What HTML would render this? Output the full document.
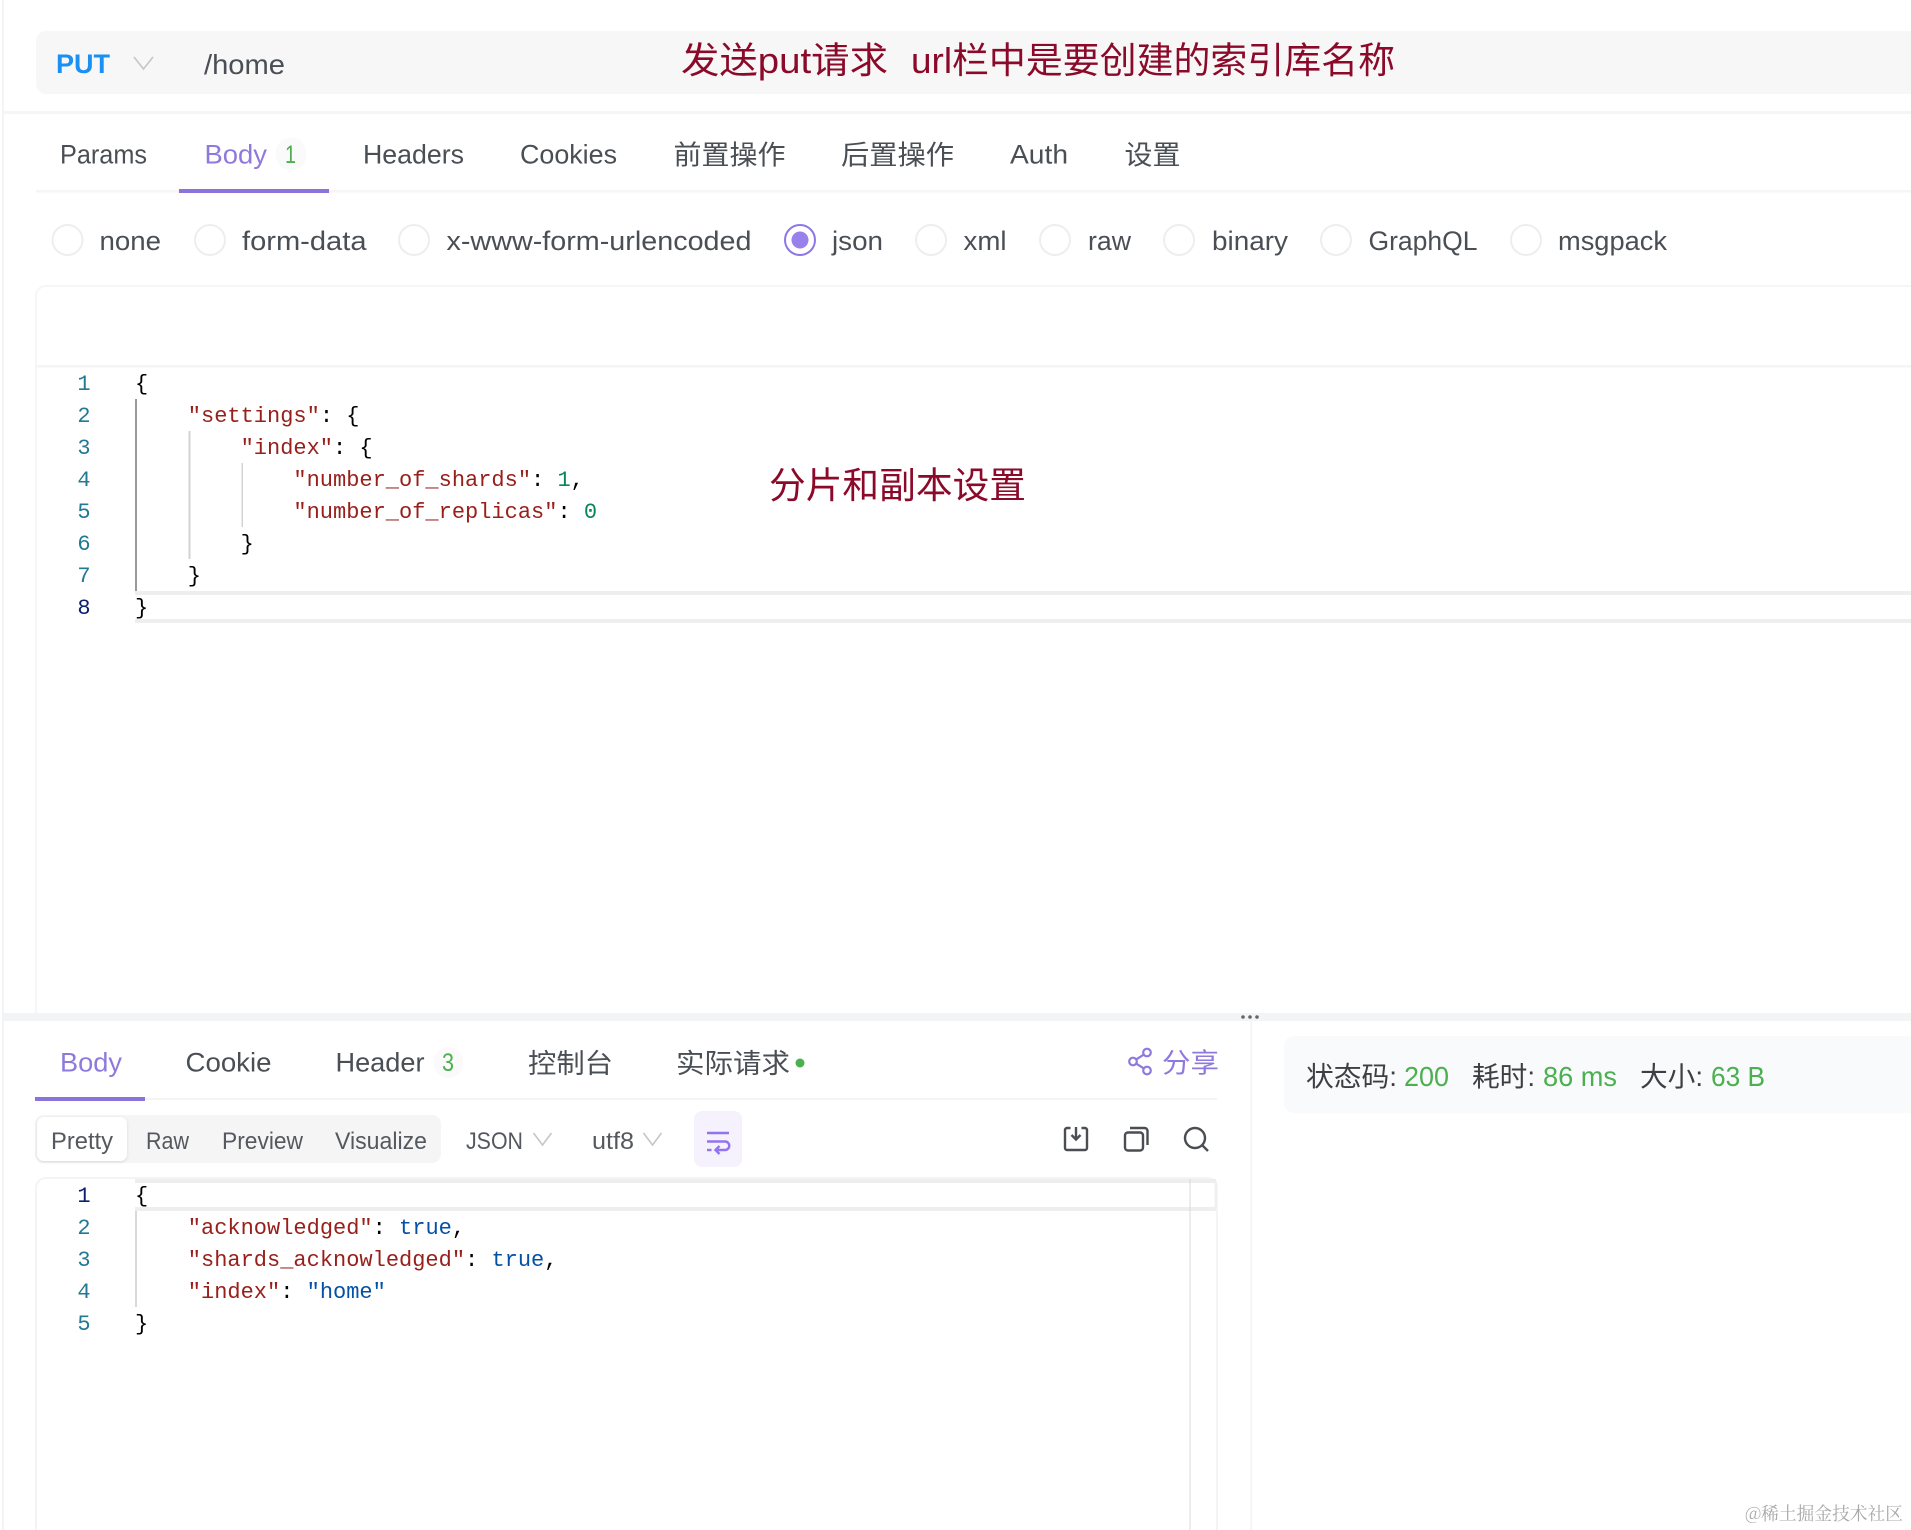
<!DOCTYPE html>
<html lang="zh-CN">
<head>
<meta charset="utf-8">
<title>PUT /home</title>
<style>
html,body{margin:0;padding:0;background:#fff;width:1911px;height:1530px;overflow:hidden}
svg{display:block}
text{font-family:"Liberation Sans","Noto Sans CJK SC",sans-serif;white-space:pre}
.t{font-size:27px;fill:#4a4f55}
.c{font-size:27.5px;fill:#4a4f55}
.s{font-size:24px;fill:#55595f}
.m{font-family:"Liberation Mono","DejaVu Sans Mono",monospace;font-size:22px;fill:#000;white-space:pre}
.n{fill:#237893;text-anchor:middle}
.k{fill:#98201c}
.v{fill:#098658}
.b{fill:#0451a5}
.a{font-size:36.5px;fill:#8b0a2a}
.g{fill:#4caf50}
</style>
</head>
<body>
<svg xmlns="http://www.w3.org/2000/svg" width="1911" height="1530" viewBox="0 0 1911 1530">
<defs>
<filter id="sh" x="-20%" y="-20%" width="140%" height="140%"><feDropShadow dx="0" dy="1" stdDeviation="1.500" flood-color="#000" flood-opacity="0.12"/></filter>
</defs>
<rect width="1911" height="1530" fill="#fff"/>
<!-- page edge -->
<rect x="2" y="0" width="2" height="1530" fill="#f4f4f4"/>

<!-- URL bar -->
<path d="M1911 31H46a10 10 0 0 0-10 10v43a10 10 0 0 0 10 10h1865z" fill="#f7f7f7"/>
<text x="56" y="73" textLength="54" lengthAdjust="spacingAndGlyphs" style="font-size:27px;font-weight:700;fill:#1a90f5">PUT</text>
<path d="M134 57l9.500 12 9.500-12" fill="none" stroke="#c4c6c8" stroke-width="1.600"/>
<text x="204" y="74" textLength="81" lengthAdjust="spacingAndGlyphs" style="font-size:28px;fill:#4a4f55">/home</text>
<text class="a" x="681" y="73" textLength="207" lengthAdjust="spacingAndGlyphs">发送put请求</text>
<text class="a" x="911" y="73" textLength="484" lengthAdjust="spacingAndGlyphs">url栏中是要创建的索引库名称</text>
<rect x="4" y="111" width="1907" height="3" fill="#f5f5f5"/>

<!-- Request tabs -->
<rect x="36" y="190" width="1875" height="2.500" fill="#f6f6f6"/>
<rect x="179" y="189" width="150" height="4" fill="#8c72db"/>
<text class="t" x="60" y="163.500" textLength="87" lengthAdjust="spacingAndGlyphs">Params</text>
<text class="t" x="204.500" y="163.500" textLength="62.500" lengthAdjust="spacingAndGlyphs" style="fill:#9079dc">Body</text>
<rect x="276" y="138" width="30" height="32" rx="14" fill="#fafafa"/>
<text class="g" x="285" y="163" textLength="11" lengthAdjust="spacingAndGlyphs" style="font-size:25px">1</text>
<text class="t" x="363" y="163.500" textLength="101" lengthAdjust="spacingAndGlyphs">Headers</text>
<text class="t" x="520" y="163.500" textLength="97" lengthAdjust="spacingAndGlyphs">Cookies</text>
<text class="t" x="673.500" y="164.500" textLength="112" lengthAdjust="spacingAndGlyphs">前置操作</text>
<text class="t" x="841" y="164.500" textLength="113" lengthAdjust="spacingAndGlyphs">后置操作</text>
<text class="t" x="1010" y="163.500" textLength="58" lengthAdjust="spacingAndGlyphs">Auth</text>
<text class="t" x="1124.500" y="164.500" textLength="56" lengthAdjust="spacingAndGlyphs">设置</text>

<!-- Radios -->
<g fill="#fff" stroke="#eeeeee" stroke-width="2">
<circle cx="67.500" cy="240" r="15"/>
<circle cx="210" cy="240" r="15"/>
<circle cx="414" cy="240" r="15"/>
<circle cx="931" cy="240" r="15"/>
<circle cx="1055" cy="240" r="15"/>
<circle cx="1179" cy="240" r="15"/>
<circle cx="1336" cy="240" r="15"/>
<circle cx="1526" cy="240" r="15"/>
</g>
<circle cx="800" cy="240" r="15" fill="#fff" stroke="#8f76e6" stroke-width="2"/>
<circle cx="800" cy="240" r="8.500" fill="#9a80ec"/>
<text class="t" x="99.500" y="250" textLength="61.500" lengthAdjust="spacingAndGlyphs">none</text>
<text class="t" x="242" y="250" textLength="124.500" lengthAdjust="spacingAndGlyphs">form-data</text>
<text class="t" x="446.500" y="250" textLength="305" lengthAdjust="spacingAndGlyphs">x-www-form-urlencoded</text>
<text class="t" x="832" y="250" textLength="51" lengthAdjust="spacingAndGlyphs">json</text>
<text class="t" x="963.500" y="250" textLength="43" lengthAdjust="spacingAndGlyphs">xml</text>
<text class="t" x="1088" y="250" textLength="43" lengthAdjust="spacingAndGlyphs">raw</text>
<text class="t" x="1212" y="250" textLength="76" lengthAdjust="spacingAndGlyphs">binary</text>
<text class="t" x="1368.500" y="250" textLength="109" lengthAdjust="spacingAndGlyphs">GraphQL</text>
<text class="t" x="1558" y="250" textLength="109" lengthAdjust="spacingAndGlyphs">msgpack</text>

<!-- Request editor -->
<path d="M1911 286H46a10 10 0 0 0-10 10v717" fill="none" stroke="#f6f6f6" stroke-width="2"/>
<rect x="36" y="365" width="1875" height="2.500" fill="#f5f5f5"/>
<path d="M135 593H1911M135 621H1911" stroke="#eeeeee" stroke-width="4" fill="none"/>
<rect x="135" y="399" width="2" height="192" fill="#999"/>
<rect x="188.500" y="431" width="2" height="128" fill="#d3d3d3"/>
<rect x="241.500" y="463" width="1.500" height="64" fill="#d3d3d3"/>
<text class="m n" x="84" y="390">1</text>
<text class="m n" x="84" y="422">2</text>
<text class="m n" x="84" y="454">3</text>
<text class="m n" x="84" y="486">4</text>
<text class="m n" x="84" y="518">5</text>
<text class="m n" x="84" y="550">6</text>
<text class="m n" x="84" y="582">7</text>
<text class="m n" x="84" y="614" style="fill:#0b216f">8</text>
<text class="m" x="135" y="390">{</text>
<text class="m" x="187.800" y="422"><tspan class="k">"settings"</tspan>: {</text>
<text class="m" x="240.600" y="454"><tspan class="k">"index"</tspan>: {</text>
<text class="m" x="293.400" y="486"><tspan class="k">"number_of_shards"</tspan>: <tspan class="v">1</tspan>,</text>
<text class="m" x="293.400" y="518"><tspan class="k">"number_of_replicas"</tspan>: <tspan class="v">0</tspan></text>
<text class="m" x="240.600" y="550">}</text>
<text class="m" x="187.800" y="582">}</text>
<text class="m" x="135" y="614">}</text>
<text class="a" x="769" y="498" textLength="257" lengthAdjust="spacingAndGlyphs">分片和副本设置</text>

<!-- Splitter -->
<rect x="4" y="1013" width="1907" height="8" fill="#f3f4f6"/>
<circle cx="1243" cy="1017" r="1.800" fill="#666"/>
<circle cx="1250" cy="1017" r="1.800" fill="#666"/>
<circle cx="1257" cy="1017" r="1.800" fill="#666"/>
<rect x="1250.500" y="1021" width="1.500" height="509" fill="#f3f3f3"/>

<!-- Response tabs -->
<rect x="36" y="1098" width="1181" height="2" fill="#f4f4f4"/>
<rect x="35" y="1097" width="110" height="4" fill="#8c72db"/>
<text class="t" x="60" y="1071.500" textLength="62" lengthAdjust="spacingAndGlyphs" style="fill:#9079dc">Body</text>
<text class="t" x="185.500" y="1071.500" textLength="86" lengthAdjust="spacingAndGlyphs">Cookie</text>
<text class="t" x="335.500" y="1071.500" textLength="89" lengthAdjust="spacingAndGlyphs">Header</text>
<rect x="434" y="1047" width="29" height="31" rx="14" fill="#fafafa"/>
<text class="g" x="442" y="1071" textLength="12" lengthAdjust="spacingAndGlyphs" style="font-size:25px">3</text>
<text class="t" x="528" y="1073" textLength="85" lengthAdjust="spacingAndGlyphs">控制台</text>
<text class="t" x="676" y="1073" textLength="114" lengthAdjust="spacingAndGlyphs">实际请求</text>
<circle cx="800" cy="1063" r="4.500" fill="#4caf50"/>
<!-- share -->
<g fill="none" stroke="#9079dc" stroke-width="2.200">
<circle cx="1147" cy="1052.500" r="3.800"/>
<circle cx="1133" cy="1061.500" r="3.800"/>
<circle cx="1147" cy="1070.500" r="3.800"/>
<path d="M1143.800 1054.600l-7.600 4.800M1136.200 1063.600l7.600 4.800"/>
</g>
<text class="t" x="1162" y="1072.500" textLength="57" lengthAdjust="spacingAndGlyphs" style="fill:#9079dc">分享</text>

<!-- Response toolbar -->
<rect x="35" y="1115" width="406" height="48" rx="9" fill="#f5f5f6"/>
<rect x="37" y="1117" width="90" height="44" rx="7" fill="#fff" filter="url(#sh)"/>
<text class="s" x="51" y="1149" textLength="62" lengthAdjust="spacingAndGlyphs">Pretty</text>
<text class="s" x="146" y="1149" textLength="43" lengthAdjust="spacingAndGlyphs">Raw</text>
<text class="s" x="222" y="1149" textLength="81" lengthAdjust="spacingAndGlyphs">Preview</text>
<text class="s" x="335" y="1149" textLength="92" lengthAdjust="spacingAndGlyphs">Visualize</text>
<text class="s" x="466" y="1149" textLength="57" lengthAdjust="spacingAndGlyphs">JSON</text>
<path d="M533.500 1133l9 12 9-12" fill="none" stroke="#c4c6c8" stroke-width="1.600"/>
<text class="s" x="592" y="1149" textLength="42" lengthAdjust="spacingAndGlyphs">utf8</text>
<path d="M643.500 1133l9 12 9-12" fill="none" stroke="#c4c6c8" stroke-width="1.600"/>
<rect x="694" y="1111" width="48" height="56" rx="8" fill="#f5f1fd"/>
<g fill="none" stroke="#9373ee" stroke-width="2.400">
<path d="M707 1133h22"/>
<path d="M707 1141.500h18a4.200 4.200 0 0 1 0 8.500h-9"/>
<path d="M719.500 1146l-4 4 4 4"/>
<path d="M707 1150h4.500"/>
</g>
<!-- save -->
<g fill="none" stroke="#4a4d52" stroke-width="2.400">
<path d="M1070.500 1128h-3.500a2 2 0 0 0-2 2v18a2 2 0 0 0 2 2h18a2 2 0 0 0 2-2v-18a2 2 0 0 0-2-2h-3.500"/>
<path d="M1076 1127v12"/>
<path d="M1071.500 1135l4.500 4.500 4.500-4.500"/>
<!-- copy -->
<rect x="1125" y="1132.500" width="18" height="18" rx="3"/>
<path d="M1130 1128h14.500a3 3 0 0 1 3 3v14"/>
<!-- search -->
<circle cx="1195" cy="1138" r="10"/>
<path d="M1202.500 1145.500l5.500 5.500"/>
</g>

<!-- Status -->
<path d="M1911 1036H1294a10 10 0 0 0-10 10v57a10 10 0 0 0 10 10h617z" fill="#f9fafb"/>
<text class="c" x="1306" y="1086" textLength="91" lengthAdjust="spacingAndGlyphs" style="fill:#3c3f43">状态码:</text>
<text class="c g" x="1404" y="1086" textLength="45" lengthAdjust="spacingAndGlyphs">200</text>
<text class="c" x="1472" y="1086" textLength="63" lengthAdjust="spacingAndGlyphs" style="fill:#3c3f43">耗时:</text>
<text class="c g" x="1543" y="1086" textLength="74" lengthAdjust="spacingAndGlyphs">86 ms</text>
<text class="c" x="1640" y="1086" textLength="63" lengthAdjust="spacingAndGlyphs" style="fill:#3c3f43">大小:</text>
<text class="c g" x="1711" y="1086" textLength="54" lengthAdjust="spacingAndGlyphs">63 B</text>

<!-- Response editor -->
<path d="M36 1530V1188a10 10 0 0 1 10-10H1207a10 10 0 0 1 10 10V1530" fill="none" stroke="#f4f4f4" stroke-width="2"/>
<path d="M135 1181H1216M135 1209H1216" stroke="#eeeeee" stroke-width="4" fill="none"/>
<rect x="1214.500" y="1181" width="2.500" height="28" fill="#f0f0f0"/>
<rect x="1189.500" y="1179" width="1" height="351" fill="#d8d8d8"/>
<rect x="135" y="1211" width="2" height="96" fill="#d9d9d9"/>
<text class="m n" x="84" y="1202" style="fill:#0b216f">1</text>
<text class="m n" x="84" y="1234">2</text>
<text class="m n" x="84" y="1266">3</text>
<text class="m n" x="84" y="1298">4</text>
<text class="m n" x="84" y="1330">5</text>
<text class="m" x="135" y="1202">{</text>
<text class="m" x="187.800" y="1234"><tspan class="k">"acknowledged"</tspan>: <tspan class="b">true</tspan>,</text>
<text class="m" x="187.800" y="1266"><tspan class="k">"shards_acknowledged"</tspan>: <tspan class="b">true</tspan>,</text>
<text class="m" x="187.800" y="1298"><tspan class="k">"index"</tspan>: <tspan class="b">"home"</tspan></text>
<text class="m" x="135" y="1330">}</text>

<!-- Watermark -->
<text x="1745" y="1520" textLength="158" lengthAdjust="spacingAndGlyphs" style="font-family:'Noto Serif CJK SC','Liberation Serif',serif;font-size:18px;fill:#a8a8a8">@稀土掘金技术社区</text>
</svg>
</body>
</html>
